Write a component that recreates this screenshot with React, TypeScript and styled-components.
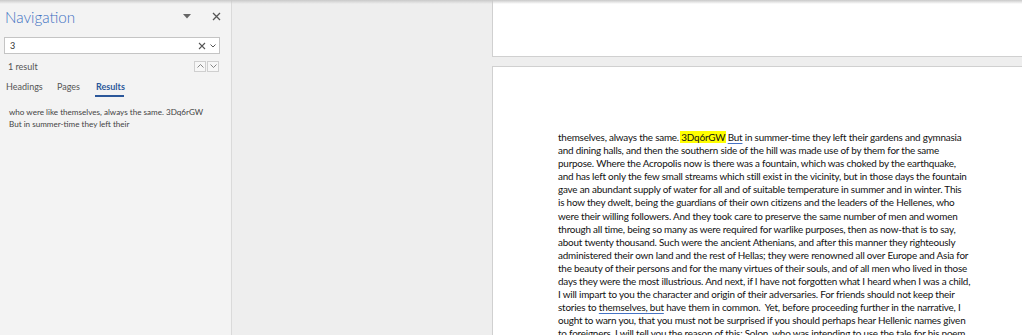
import React from "react";
import styled, { createGlobalStyle } from "styled-components";

const Global = createGlobalStyle`
  html, body { margin: 0; padding: 0; width: 1022px; height: 335px; overflow: hidden; background: #eeeeee; }
  #root { width: 1022px; height: 335px; }
`;

const Shell = styled.div`
  position: relative;
  display: flex;
  width: 1022px;
  height: 335px;
  overflow: hidden;
  background: #eeeeee;
`;

const TopShadow = styled.div`
  position: absolute;
  left: 0;
  top: 0;
  right: 0;
  height: 4px;
  background: linear-gradient(#c9c9c9, rgba(238, 238, 238, 0));
  pointer-events: none;
  z-index: 2;
`;

const NavPane = styled.aside`
  width: 231px;
  flex: none;
  background: #f3f3f3;
  border-right: 1px solid #dadada;
  font-family: "Lato", "Open Sans", sans-serif;
  color: #444;
  display: flex;
  flex-direction: column;
`;

const NavHeader = styled.div`
  display: flex;
  align-items: center;
  height: 33px;
  padding: 0 0 0 5px;
`;

const NavTitle = styled.div`
  flex: 1;
  font-size: 15.2px;
  font-weight: 300;
  color: #3d70c2;
`;

const IconBtn = styled.div<{ w: number }>`
  width: ${(p) => p.w}px;
  display: flex;
  align-items: center;
  justify-content: center;
  color: #555;
`;

const SearchBox = styled.div`
  margin: 4px 11px 0 4px;
  height: 15px;
  border: 1px solid #c4c4c4;
  background: #fff;
  display: flex;
  align-items: center;
  padding-left: 5px;
  font-size: 9px;
  color: #333;
`;

const SearchText = styled.div`
  flex: 1;
`;

const ResultRow = styled.div`
  display: flex;
  align-items: center;
  height: 14px;
  margin: 5px 12px 0 8px;
  font-size: 9px;
  color: #555;
`;

const ResultCount = styled.div`
  flex: 1;
`;

const ArrowBtn = styled.div`
  width: 10px;
  height: 9px;
  border: 1px solid #cfcfcf;
  background: #f7f7f7;
  margin-left: 1px;
  display: flex;
  align-items: center;
  justify-content: center;
`;

const Tabs = styled.div`
  display: flex;
  margin: 6px 0 0 6px;
`;

const Tab = styled.div<{ active?: boolean; w: number }>`
  width: ${(p) => p.w}px;
  font-size: 9px;
  height: 18px;
  line-height: 16px;
  color: ${(p) => (p.active ? "#2b579a" : "#555")};
  font-weight: ${(p) => (p.active ? 700 : 400)};
  position: relative;
  &::after {
    content: "";
    display: ${(p) => (p.active ? "block" : "none")};
    position: absolute;
    left: -1px;
    width: 29px;
    bottom: 0;
    height: 2px;
    background: #2b579a;
  }
`;

const Snippet = styled.div`
  margin: 9px 0 0 9px;
  font-size: 8.1px;
  line-height: 12px;
  color: #444;
`;

const Canvas = styled.main`
  flex: 1;
  display: flex;
  flex-direction: column;
  padding-left: 260px;
  gap: 9px;
`;

const PrevPage = styled.div`
  height: 56px;
  flex: none;
  background: #fff;
  border: 1px solid #d0d0d0;
  border-top: none;
  border-right: none;
`;

const Page = styled.div`
  flex: 1;
  background: #fff;
  border: 1px solid #d0d0d0;
  border-right: none;
  border-bottom: none;
  padding: 64px 0 0 65px;
  font-family: "Lato", "Open Sans", sans-serif;
  font-size: 9.9px;
  letter-spacing: -0.2px;
  line-height: 13.1px;
  color: #111;
  white-space: nowrap;
`;

const Line = styled.div``;

const Hit = styled.span`
  background: #ffff00;
  padding: 0 1px;
  margin: 0 -1px;
`;

const Squiggle = styled.span`
  text-decoration: underline;
  text-decoration-color: #4472c4;
  text-underline-offset: 2px;
`;

const lines: React.ReactNode[] = [
  <>themselves, always the same. <Hit>3Dq6rGW</Hit> <Squiggle>But</Squiggle> in summer-time they left their gardens and gymnasia</>,
  "and dining halls, and then the southern side of the hill was made use of by them for the same",
  "purpose. Where the Acropolis now is there was a fountain, which was choked by the earthquake,",
  "and has left only the few small streams which still exist in the vicinity, but in those days the fountain",
  "gave an abundant supply of water for all and of suitable temperature in summer and in winter. This",
  "is how they dwelt, being the guardians of their own citizens and the leaders of the Hellenes, who",
  "were their willing followers. And they took care to preserve the same number of men and women",
  "through all time, being so many as were required for warlike purposes, then as now-that is to say,",
  "about twenty thousand. Such were the ancient Athenians, and after this manner they righteously",
  "administered their own land and the rest of Hellas; they were renowned all over Europe and Asia for",
  "the beauty of their persons and for the many virtues of their souls, and of all men who lived in those",
  "days they were the most illustrious. And next, if I have not forgotten what I heard when I was a child,",
  "I will impart to you the character and origin of their adversaries. For friends should not keep their",
  <>stories to <Squiggle>themselves, but</Squiggle> have them in common.&nbsp; Yet, before proceeding further in the narrative, I</>,
  "ought to warn you, that you must not be surprised if you should perhaps hear Hellenic names given",
  "to foreigners. I will tell you the reason of this: Solon, who was intending to use the tale for his poem,",
];

export default function App() {
  return (
    <>
      <Global />
      <Shell>
        <TopShadow />
        <NavPane>
          <NavHeader>
            <NavTitle>Navigation</NavTitle>
            <IconBtn w={28}>
              <svg width="8" height="5" viewBox="0 0 8 5"><path d="M0 0h8L4 4.5z" fill="#666" /></svg>
            </IconBtn>
            <IconBtn w={30}>
              <svg width="9" height="9" viewBox="0 0 9 9"><path d="M1 1l7 7M8 1L1 8" stroke="#555" strokeWidth="1.3" /></svg>
            </IconBtn>
          </NavHeader>
          <SearchBox>
            <SearchText>3</SearchText>
            <svg width="8" height="8" viewBox="0 0 8 8" style={{ marginRight: 4 }}><path d="M1 1l6 6M7 1L1 7" stroke="#555" strokeWidth="1.1" /></svg>
            <svg width="6" height="4" viewBox="0 0 6 4" style={{ marginRight: 3 }}><path d="M0.5 0.5L3 3l2.5-2.5" stroke="#555" fill="none" strokeWidth="1" /></svg>
          </SearchBox>
          <ResultRow>
            <ResultCount>1 result</ResultCount>
            <ArrowBtn>
              <svg width="7" height="4" viewBox="0 0 7 4"><path d="M0.5 3.5L3.5 0.5l3 3" stroke="#777" fill="none" strokeWidth="0.9" /></svg>
            </ArrowBtn>
            <ArrowBtn>
              <svg width="7" height="4" viewBox="0 0 7 4"><path d="M0.5 0.5L3.5 3.5l3-3" stroke="#777" fill="none" strokeWidth="0.9" /></svg>
            </ArrowBtn>
          </ResultRow>
          <Tabs>
            <Tab w={51}>Headings</Tab>
            <Tab w={39}>Pages</Tab>
            <Tab w={40} active>Results</Tab>
          </Tabs>
          <Snippet>
            who were like themselves, always the same. 3Dq6rGW<br />
            But in summer-time they left their
          </Snippet>
        </NavPane>
        <Canvas>
          <PrevPage />
          <Page>
            {lines.map((l, i) => (
              <Line key={i}>{l}</Line>
            ))}
          </Page>
        </Canvas>
      </Shell>
    </>
  );
}
